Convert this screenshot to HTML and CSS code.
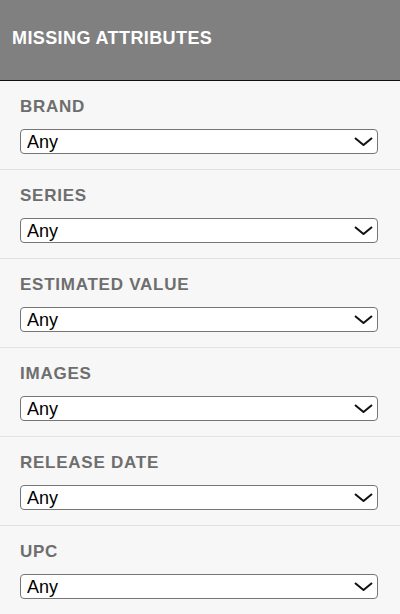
FILE: index.html
```html
<!DOCTYPE html>
<html>
<head>
<meta charset="utf-8">
<link rel="stylesheet" href="styles.css">
</head>
<body>
<div class="panel">
  <div class="header">MISSING ATTRIBUTES</div>
  <div class="section">
    <div class="label">BRAND</div>
    <div class="select-wrap">
      <select class="select"><option>Any</option></select>
      <svg class="chev" width="19" height="9" viewBox="0 0 19 9"><path d="M1 1 L9.5 8 L18 1" fill="none" stroke="#111" stroke-width="2"/></svg>
    </div>
  </div>
  <div class="section">
    <div class="label">SERIES</div>
    <div class="select-wrap">
      <select class="select"><option>Any</option></select>
      <svg class="chev" width="19" height="9" viewBox="0 0 19 9"><path d="M1 1 L9.5 8 L18 1" fill="none" stroke="#111" stroke-width="2"/></svg>
    </div>
  </div>
  <div class="section">
    <div class="label">ESTIMATED VALUE</div>
    <div class="select-wrap">
      <select class="select"><option>Any</option></select>
      <svg class="chev" width="19" height="9" viewBox="0 0 19 9"><path d="M1 1 L9.5 8 L18 1" fill="none" stroke="#111" stroke-width="2"/></svg>
    </div>
  </div>
  <div class="section">
    <div class="label">IMAGES</div>
    <div class="select-wrap">
      <select class="select"><option>Any</option></select>
      <svg class="chev" width="19" height="9" viewBox="0 0 19 9"><path d="M1 1 L9.5 8 L18 1" fill="none" stroke="#111" stroke-width="2"/></svg>
    </div>
  </div>
  <div class="section">
    <div class="label">RELEASE DATE</div>
    <div class="select-wrap">
      <select class="select"><option>Any</option></select>
      <svg class="chev" width="19" height="9" viewBox="0 0 19 9"><path d="M1 1 L9.5 8 L18 1" fill="none" stroke="#111" stroke-width="2"/></svg>
    </div>
  </div>
  <div class="section">
    <div class="label">UPC</div>
    <div class="select-wrap">
      <select class="select"><option>Any</option></select>
      <svg class="chev" width="19" height="9" viewBox="0 0 19 9"><path d="M1 1 L9.5 8 L18 1" fill="none" stroke="#111" stroke-width="2"/></svg>
    </div>
  </div>
</div>
</body>
</html>
```
FILE: styles.css
```css
html, body {
  margin: 0;
  padding: 0;
  background: #f7f7f7;
  font-family: "Liberation Sans", Arial, sans-serif;
}
.panel {
  width: 400px;
  display: flex;
  flex-direction: column;
}
.header {
  box-sizing: border-box;
  background: #808080;
  border-bottom: 1px solid #111;
  height: 81px;
  color: #fff;
  font-weight: bold;
  font-size: 18px;
  letter-spacing: 0.4px;
  padding: 28px 0 0 12px;
  line-height: 21px;
}
.section {
  box-sizing: border-box;
  height: 89px;
  padding: 16px 22px 0 20px;
  border-bottom: 1px solid #e2e2e2;
}
.label {
  color: #6e6e6e;
  font-weight: bold;
  font-size: 17px;
  line-height: 19px;
  letter-spacing: 0.75px;
}
.select-wrap {
  position: relative;
  margin-top: 13px;
}
.select {
  -webkit-appearance: none;
  appearance: none;
  display: block;
  width: 100%;
  height: 25px;
  box-sizing: border-box;
  border: 1px solid #767676;
  border-radius: 4px;
  background: #fff;
  font-family: "Liberation Sans", Arial, sans-serif;
  font-size: 18px;
  color: #000;
  padding: 0 0 0 6px;
  margin: 0;
}
.chev {
  position: absolute;
  right: 5px;
  top: 8px;
  pointer-events: none;
}
```
